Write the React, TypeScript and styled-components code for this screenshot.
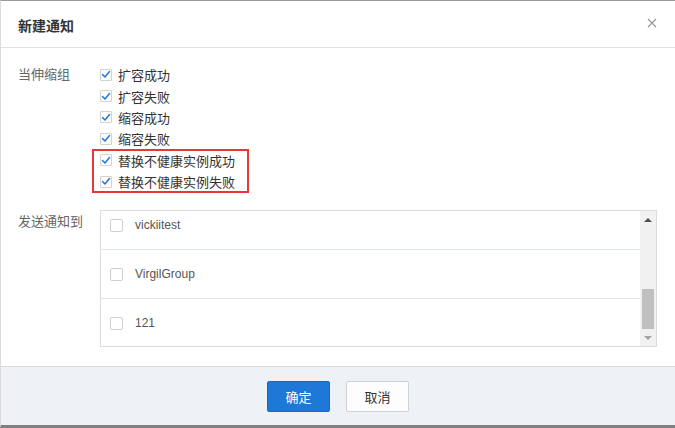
import React from "react";
import styled, { createGlobalStyle } from "styled-components";

const GlobalStyle = createGlobalStyle`
  html, body {
    margin: 0;
    padding: 0;
    background: #ffffff;
  }
  body {
    font-family: "Liberation Sans", "Noto Sans CJK SC", sans-serif;
    color: #333;
  }
`;

const scaleEvents = [
  { label: "扩容成功" },
  { label: "扩容失败" },
  { label: "缩容成功" },
  { label: "缩容失败" },
];

const highlighted = ["替换不健康实例成功", "替换不健康实例失败"];

const groups = [
  { name: "vickiitest", tint: true },
  { name: "VirgilGroup", tint: false },
  { name: "121", tint: false },
];

function CheckMark() {
  return (
    <svg width="10" height="9" viewBox="0 0 10 9">
      <polyline
        points="1.5,4.5 4,7 8.5,1.5"
        fill="none"
        stroke="#1e78d7"
        strokeWidth="1.5"
        strokeLinecap="round"
        strokeLinejoin="round"
      />
    </svg>
  );
}

function CloseIcon() {
  return (
    <svg width="10" height="10" viewBox="0 0 10 10">
      <path d="M1 1 L9 9 M9 1 L1 9" stroke="#9a9a9a" strokeWidth="1.2" />
    </svg>
  );
}

export default function App() {
  return (
    <>
      <GlobalStyle />
      <Dialog>
        <Header>
          <Title>新建通知</Title>
          <CloseButton>
            <CloseIcon />
          </CloseButton>
        </Header>

        <Body>
          <FieldRow>
            <Label>当伸缩组</Label>
            <CheckList>
              {scaleEvents.map((e) => (
                <CheckRow key={e.label}>
                  <Box>
                    <CheckMark />
                  </Box>
                  <CheckText>{e.label}</CheckText>
                </CheckRow>
              ))}
              <Highlight>
                {highlighted.map((t) => (
                  <CheckRow key={t}>
                    <Box>
                      <CheckMark />
                    </Box>
                    <CheckText>{t}</CheckText>
                  </CheckRow>
                ))}
              </Highlight>
            </CheckList>
          </FieldRow>

          <FieldRow $gap>
            <Label $top>发送通知到</Label>
            <ListBox>
              <Rows>
                {groups.map((g, i) => (
                  <ListRow key={g.name} $tint={g.tint} $first={i === 0}>
                    <EmptyBox />
                    <RowText>{g.name}</RowText>
                  </ListRow>
                ))}
              </Rows>
              <Scrollbar>
                <ArrowButton>
                  <ArrowUp />
                </ArrowButton>
                <Track>
                  <Thumb />
                </Track>
                <ArrowButton>
                  <ArrowDown />
                </ArrowButton>
              </Scrollbar>
            </ListBox>
          </FieldRow>
        </Body>

        <Footer>
          <Button $primary>确定</Button>
          <Button>取消</Button>
        </Footer>
      </Dialog>
    </>
  );
}

const Dialog = styled.div`
  width: 675px;
  height: 428px;
  box-sizing: border-box;
  display: flex;
  flex-direction: column;
  background: #fff;
  border-top: 1px solid #9a9a9a;
  border-left: 1px solid #dcdcdc;
  border-bottom: 3px solid #808080;
  overflow: hidden;
`;

const Header = styled.div`
  height: 46px;
  flex-shrink: 0;
  display: flex;
  align-items: center;
  justify-content: space-between;
  padding: 0 18px 0 17px;
  border-bottom: 1px solid #e2e2e2;
`;

const Title = styled.div`
  font-size: 14px;
  font-weight: 600;
  color: #333;
  margin-top: 1px;
`;

const CloseButton = styled.div`
  width: 10px;
  height: 10px;
  display: flex;
  cursor: pointer;
  margin-top: -2px;
`;

const Body = styled.div`
  flex: 1;
  display: flex;
  flex-direction: column;
  padding: 16px 17px 0;
`;

const FieldRow = styled.div<{ $gap?: boolean }>`
  display: flex;
  margin-top: ${(p) => (p.$gap ? "18px" : "0")};
`;

const Label = styled.div<{ $top?: boolean }>`
  width: 82px;
  flex-shrink: 0;
  font-size: 13px;
  color: #666;
  line-height: ${(p) => (p.$top ? "18px" : "21.4px")};
  padding-top: ${(p) => (p.$top ? "3px" : "0")};
`;

const CheckList = styled.div`
  display: flex;
  flex-direction: column;
`;

const CheckRow = styled.div`
  height: 21.4px;
  display: flex;
  align-items: center;
  gap: 6px;
`;

const Highlight = styled.div`
  width: 148px;
  margin-left: -7px;
  padding-left: 7px;
  outline: 2px solid #e8363a;
  outline-offset: -1px;
`;

const Box = styled.span`
  width: 12px;
  height: 12px;
  box-sizing: border-box;
  border: 1px solid #d2d2d2;
  border-radius: 1px;
  display: flex;
  align-items: center;
  justify-content: center;
`;

const CheckText = styled.span`
  font-size: 13px;
  color: #333;
`;

const ListBox = styled.div`
  width: 557px;
  height: 137px;
  box-sizing: border-box;
  border: 1px solid #dcdcdc;
  display: flex;
`;

const Rows = styled.div`
  flex: 1;
  overflow: hidden;
  display: flex;
  flex-direction: column;
`;

const ListRow = styled.div<{ $tint?: boolean; $first?: boolean }>`
  height: 49px;
  flex-shrink: 0;
  box-sizing: border-box;
  display: flex;
  align-items: center;
  gap: 12px;
  padding-left: 9px;
  margin-top: ${(p) => (p.$first ? "-10px" : "0")};
  border-bottom: 1px solid ${(p) => (p.$tint ? "#dde7f2" : "#e4e4e4")};
`;

const EmptyBox = styled.span`
  width: 13px;
  height: 13px;
  box-sizing: border-box;
  border: 1px solid #cfcfcf;
  border-radius: 2px;
  background: #fff;
`;

const RowText = styled.span`
  font-size: 12px;
  color: #555;
`;

const Scrollbar = styled.div`
  width: 16px;
  flex-shrink: 0;
  background: #f1f1f1;
  display: flex;
  flex-direction: column;
`;

const ArrowButton = styled.div`
  height: 17px;
  flex-shrink: 0;
  display: flex;
  align-items: center;
  justify-content: center;
`;

const ArrowUp = styled.span`
  width: 0;
  height: 0;
  border-left: 4px solid transparent;
  border-right: 4px solid transparent;
  border-bottom: 4px solid #505050;
`;

const ArrowDown = styled.span`
  width: 0;
  height: 0;
  border-left: 4px solid transparent;
  border-right: 4px solid transparent;
  border-top: 4px solid #a3a3a3;
`;

const Track = styled.div`
  flex: 1;
  display: flex;
  flex-direction: column;
  justify-content: flex-end;
  padding: 0 2px;
`;

const Thumb = styled.div`
  height: 40px;
  background: #c1c1c1;
`;

const Footer = styled.div`
  height: 59px;
  flex-shrink: 0;
  box-sizing: border-box;
  border-top: 1px solid #dcdcdc;
  background: #eef2f6;
  display: flex;
  align-items: center;
  justify-content: center;
  gap: 16px;
`;

const Button = styled.button<{ $primary?: boolean }>`
  width: 63px;
  height: 31px;
  box-sizing: border-box;
  border-radius: 2px;
  font-family: "Liberation Sans", "Noto Sans CJK SC", sans-serif;
  font-size: 13px;
  cursor: pointer;
  padding: 0;
  background: ${(p) => (p.$primary ? "#1e78d7" : "#fdfdfd")};
  border: 1px solid ${(p) => (p.$primary ? "#1769c4" : "#d0d0d0")};
  color: ${(p) => (p.$primary ? "#ffffff" : "#333333")};
`;
